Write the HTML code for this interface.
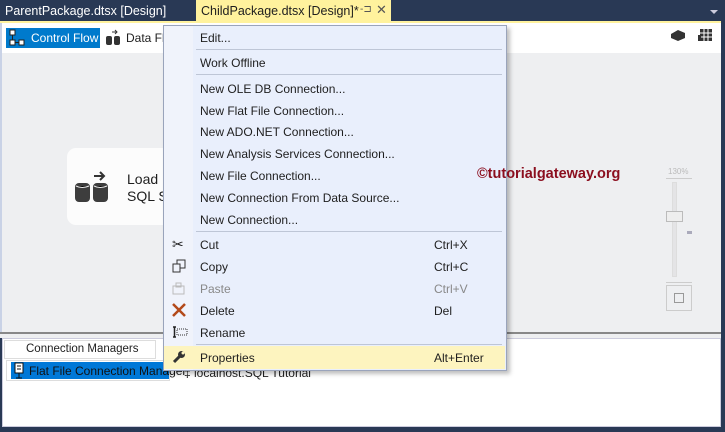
<!DOCTYPE html>
<html><head><meta charset="utf-8"><style>
*{margin:0;padding:0;box-sizing:border-box}
body{width:725px;height:432px;overflow:hidden;background:#293955;font-family:"Liberation Sans",sans-serif;font-size:12px;color:#1e1e1e;position:relative}
.a{position:absolute}
.mi{position:absolute;left:200px;font-size:12px;color:#1e1e1e}
.sc{position:absolute;left:434px;font-size:12px}
.sep{position:absolute;left:196px;width:306px;height:1px;background:#bec6d6}
</style></head><body>
<!-- tabs -->
<div class="a" style="left:5px;top:4px;color:#fff;font-size:12.5px">ParentPackage.dtsx [Design]</div>
<div class="a" style="left:196px;top:0;width:195px;height:22px;background:#fff29d"></div>
<div class="a" style="left:201px;top:4px;font-size:12.5px;color:#1e1e1e">ChildPackage.dtsx [Design]*</div>
<div class="a" style="left:360px;top:4px;font-size:10px;color:#555">-⊐</div>
<div class="a" style="left:376px;top:2px;font-size:13px;color:#555">✕</div>
<div class="a" style="left:710px;top:10px;width:0;height:0;border-left:4px solid transparent;border-right:4px solid transparent;border-top:4px solid #ccd"></div>
<!-- main doc -->
<div class="a" style="left:0;top:21px;width:721px;height:2px;background:#fff29d"></div>
<div class="a" style="left:0;top:23px;width:721px;height:30px;background:#fff"></div>
<div class="a" style="left:0;top:23px;width:2px;height:310px;background:#c9d2e6"></div>
<div class="a" style="left:6px;top:28px;width:94px;height:20px;background:#007acc"></div>
<svg class="a" style="left:9px;top:29px" width="16" height="18"><rect x="1" y="1" width="5" height="5" fill="#fff" stroke="#222"/><rect x="1" y="11" width="5" height="5" fill="#fff" stroke="#222"/><rect x="10" y="11" width="5" height="5" fill="#fff" stroke="#222"/><path d="M3.5 6v5M6 13.5h4" stroke="#222"/></svg>
<div class="a" style="left:31px;top:31px;color:#fff">Control Flow</div>
<svg class="a" style="left:105px;top:29px" width="16" height="18"><path d="M7 3h5M10 1l2 2-2 2" stroke="#333" fill="none"/><rect x="1" y="7" width="6" height="9" rx="2" fill="#333"/><rect x="9" y="7" width="6" height="9" rx="2" fill="#333"/></svg>
<div class="a" style="left:126px;top:31px">Data Flo</div>
<svg class="a" style="left:670px;top:28px" width="16" height="14"><path d="M1 6l7-4 7 3v5l-7 3-7-3z" fill="#333"/></svg>
<svg class="a" style="left:697px;top:28px" width="16" height="16"><rect x="3" y="1" width="12" height="12" fill="#333"/><path d="M7 1v12M11 1v12M3 5h12M3 9h12" stroke="#fff"/><rect x="1" y="7" width="3" height="6" fill="#333"/></svg>
<div class="a" style="left:2px;top:53px;width:719px;height:279px;background:#eeeff1"></div>
<div class="a" style="left:67px;top:148px;width:130px;height:77px;background:#fcfcfc;border-radius:9px"></div>
<svg class="a" style="left:74px;top:170px" width="40" height="34"><path d="M20 6h9M26 2l4 4-4 4" stroke="#333" stroke-width="2" fill="none"/><rect x="1" y="13" width="15" height="19" rx="4" fill="#3d3d3d"/><rect x="19" y="13" width="15" height="19" rx="4" fill="#3d3d3d"/><path d="M2 16q6 3 13 0M20 16q6 3 13 0" stroke="#eee"/></svg>
<div class="a" style="left:127px;top:171px;font-size:14px">Load D</div>
<div class="a" style="left:127px;top:188px;font-size:14px">SQL S</div>
<div class="a" style="left:668px;top:167px;font-size:8px;color:#bbb">130%</div>
<div class="a" style="left:666px;top:178px;width:26px;height:1px;background:#ccc"></div>
<div class="a" style="left:672px;top:182px;width:5px;height:95px;background:#e4e4e6;border:1px solid #ddd"></div>
<div class="a" style="left:666px;top:211px;width:17px;height:11px;border:1px solid #bbb;background:#eee"></div>
<div class="a" style="left:687px;top:231px;width:5px;height:3px;background:#aab"></div>
<div class="a" style="left:666px;top:282px;width:26px;height:1px;background:#ccc"></div>
<div class="a" style="left:666px;top:285px;width:26px;height:26px;border:1px solid #ccc"></div>
<div class="a" style="left:674px;top:293px;width:10px;height:10px;border:1px solid #999"></div>
<div class="a" style="left:0;top:332px;width:721px;height:2px;background:#888"></div>
<!-- bottom panel -->
<div class="a" style="left:0;top:334px;width:721px;height:4px;background:#eeeff1"></div>
<div class="a" style="left:2px;top:338px;width:719px;height:89px;background:#fff;border:1px solid #ccd"></div>
<div class="a" style="left:4px;top:340px;width:152px;height:19px;background:#fff;border:1px solid #ddd"></div>
<div class="a" style="left:26px;top:343px;font-size:11.5px">Connection Managers</div>
<div class="a" style="left:6px;top:360px;width:164px;height:21px;border:1px solid #ddd"></div>
<div class="a" style="left:11px;top:362px;width:158px;height:17px;background:#0078d7"></div>
<svg class="a" style="left:13px;top:362px" width="12" height="17"><rect x="2" y="1" width="8" height="10" fill="#fff" stroke="#111"/><path d="M6 11v5M3 16h6M4 4h4M4 7h4" stroke="#111"/></svg>
<div class="a" style="left:29px;top:364px;color:#111">Flat File Connection Manager</div>
<div class="a" style="left:184px;top:366px;color:#222">‡ localhost.SQL Tutorial</div>
<!-- menu -->
<div class="a" style="left:166px;top:28px;width:344px;height:346px;background:rgba(0,0,0,.25);filter:blur(2px)"></div>
<div class="a" style="left:163px;top:25px;width:344px;height:346px;background:#e9effc;border:1px solid #9aa4bb"></div>
<div class="a" style="left:164px;top:26px;width:29px;height:344px;background:#f0f3fb"></div>
<div class="mi" style="top:31px">Edit...</div>
<div class="sep" style="top:49px"></div>
<div class="mi" style="top:56px">Work Offline</div>
<div class="sep" style="top:74px"></div>
<div class="mi" style="top:82px">New OLE DB Connection...</div>
<div class="mi" style="top:104px">New Flat File Connection...</div>
<div class="mi" style="top:125px">New ADO.NET Connection...</div>
<div class="mi" style="top:147px">New Analysis Services Connection...</div>
<div class="mi" style="top:169px">New File Connection...</div>
<div class="mi" style="top:191px">New Connection From Data Source...</div>
<div class="mi" style="top:213px">New Connection...</div>
<div class="sep" style="top:231px"></div>
<div class="a" style="left:172px;top:236px;font-size:14px;color:#222">✂</div>
<div class="mi" style="top:238px">Cut</div><div class="sc" style="top:238px">Ctrl+X</div>
<svg class="a" style="left:172px;top:259px" width="14" height="14"><rect x="1" y="5" width="7" height="8" fill="none" stroke="#333"/><path d="M5 5V1h8v8H8" fill="none" stroke="#333"/></svg>
<div class="mi" style="top:260px">Copy</div><div class="sc" style="top:260px">Ctrl+C</div>
<svg class="a" style="left:172px;top:281px" width="14" height="14"><rect x="1" y="5" width="11" height="8" fill="none" stroke="#bbb"/><rect x="4" y="2" width="5" height="4" fill="none" stroke="#bbb"/></svg>
<div class="mi" style="top:282px;color:#888">Paste</div><div class="sc" style="top:282px;color:#888">Ctrl+V</div>
<svg class="a" style="left:172px;top:303px" width="14" height="14"><path d="M1 1l12 12M13 1L1 13" stroke="#b34a1a" stroke-width="2.5"/></svg>
<div class="mi" style="top:304px">Delete</div><div class="sc" style="top:304px">Del</div>
<svg class="a" style="left:172px;top:326px" width="16" height="12"><path d="M1 1h3M1 11h3M2.5 1v10" stroke="#222" stroke-width="1.5"/><rect x="5" y="3" width="10" height="6" fill="none" stroke="#333" stroke-dasharray="1 1"/></svg>
<div class="mi" style="top:326px">Rename</div>
<div class="sep" style="top:344px"></div>
<div class="a" style="left:164px;top:346px;width:341px;height:23px;background:#fdf4bf"></div>
<svg class="a" style="left:172px;top:350px" width="14" height="14"><path d="M2 12l6-6" stroke="#333" stroke-width="3"/><circle cx="9.5" cy="4.5" r="3.5" fill="#333"/><circle cx="11" cy="3" r="1.5" fill="#fdf4bf"/></svg>
<div class="mi" style="top:351px">Properties</div><div class="sc" style="top:351px">Alt+Enter</div>
<!-- watermark on top -->
<div class="a" style="left:477px;top:166px;font-size:14.5px;font-weight:bold;color:#8b0e1e;white-space:nowrap">©tutorialgateway.org</div>
</body></html>
